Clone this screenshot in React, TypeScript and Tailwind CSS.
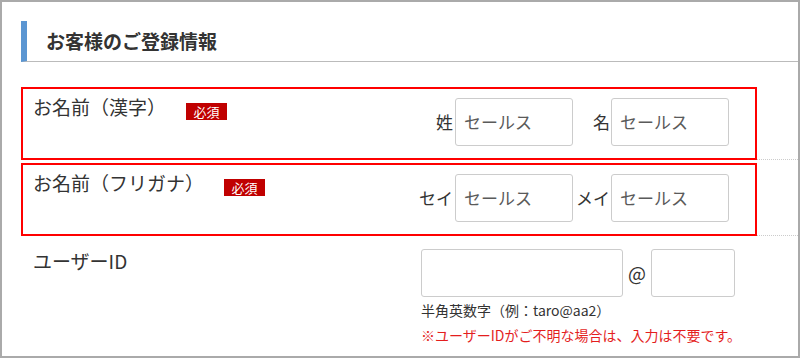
import React from 'react'

const jp = "font-['Noto_Sans_CJK_JP',sans-serif]"

function Badge() {
  return (
    <span className="ml-5 mt-[8px] inline-block h-[17px] w-[41px] bg-[#c00000] text-center text-[13px] leading-[17px] text-white">
      必須
    </span>
  )
}

function TextBox({ width, value }: { width: string; value?: string }) {
  return (
    <input
      readOnly
      defaultValue={value}
      className={`h-12 shrink-0 ${width} rounded-[3px] border border-[#cccccc] bg-white px-2 text-[17px] text-[#5a5a5a] outline-none ${jp}`}
    />
  )
}

function NameRow({ label, first, second }: { label: string; first: string; second: string }) {
  return (
    <div className="relative flex h-[76px] border-b border-dotted border-[#cccccc]">
      <div className="flex w-[400px] shrink-0 items-start pl-3 pt-[11px]">
        <span className="text-[19px] leading-6 text-[#333]">{label}</span>
        <Badge />
      </div>
      <div className="flex items-center">
        <span className="flex w-8 shrink-0 justify-end whitespace-nowrap text-[17px] text-[#333]">{first}</span>
        <div className="ml-0.5">
          <TextBox width="w-[118px]" value="セールス" />
        </div>
        <span className="flex w-[37px] shrink-0 justify-end whitespace-nowrap text-[17px] text-[#333]">{second}</span>
        <div className="ml-px">
          <TextBox width="w-[118px]" value="セールス" />
        </div>
      </div>
      <div className="pointer-events-none absolute left-0 top-[3px] bottom-[-1px] w-[736px] border-2 border-[#ff0000]" />
    </div>
  )
}

export default function App() {
  return (
    <div className={`h-[358px] w-[800px] overflow-hidden border-2 border-[#aaaaaa] bg-white pl-[19px] pt-[19px] ${jp}`}>
      <div className="flex h-[41px] items-center border-b border-l-[6px] border-b-[#bbbbbb] border-l-[#5b96d2] pl-[19px]">
        <h2 className="text-[19px] font-bold text-[#333]">お客様のご登録情報</h2>
      </div>

      <div className="mt-[22px]">
        <NameRow label="お名前（漢字）" first="姓" second="名" />
        <NameRow label="お名前（フリガナ）" first="セイ" second="メイ" />

        <div className="flex pt-[13px]">
          <div className="w-[400px] shrink-0 pl-3">
            <span className="text-[19px] leading-6 text-[#333]">ユーザーID</span>
          </div>
          <div className="flex flex-col">
            <div className="flex items-center">
              <TextBox width="w-[202px]" />
              <span className="mx-[5px] text-[19px] text-[#333]">@</span>
              <TextBox width="w-[84px]" />
            </div>
            <p className="mt-[3px] text-[14px] leading-5 text-[#333]">半角英数字（例：taro@aa2）</p>
            <p className="mt-[5px] text-[14px] leading-5 text-[#e41e1e]">※ユーザーIDがご不明な場合は、入力は不要です。</p>
          </div>
        </div>
      </div>
    </div>
  )
}
